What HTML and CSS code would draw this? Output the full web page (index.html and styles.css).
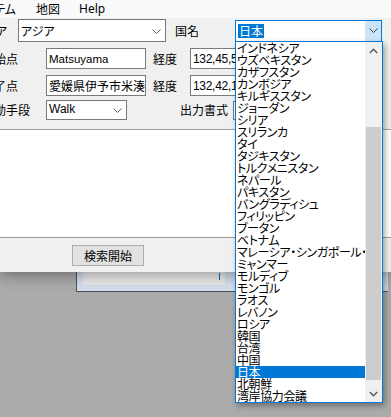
FILE: index.html
```html
<!DOCTYPE html>
<html lang="ja">
<head>
<meta charset="utf-8">
<title>経路検索</title>
<link rel="stylesheet" href="styles.css">
</head>
<body>
<div class="screen">
  <div class="window">
    <div class="menubar">
      <span class="menu menu-sys">システム</span>
      <span class="menu menu-map">地図</span>
      <span class="menu menu-help">Help</span>
    </div>
    <div class="form">
      <div class="row row-area">
        <span class="label label-area"><span>エリア</span></span>
        <div class="combo combo-area"><span class="combo-text">アジア</span><svg class="chev" width="9" height="5" viewBox="0 0 9 5"><polyline points="0.5,0.5 4.5,4.5 8.5,0.5" fill="none" stroke="#606060" stroke-width="1"/></svg></div>
        <span class="label label-country">国名</span>
        <div class="combo combo-country"><span class="combo-text"><span class="sel">日本</span></span><span class="drop-btn"><svg width="9" height="5" viewBox="0 0 9 5"><polyline points="0.5,0.5 4.5,4.5 8.5,0.5" fill="none" stroke="#404040" stroke-width="1"/></svg></span></div>
      </div>
      <div class="row row-start">
        <span class="label label-main">開始点</span>
        <div class="input input-name">Matsuyama</div>
        <span class="label label-lng">経度</span>
        <div class="input input-coord">132,45,55</div>
      </div>
      <div class="row row-end">
        <span class="label label-main">終了点</span>
        <div class="input input-name">愛媛県伊予市米湊</div>
        <span class="label label-lng">経度</span>
        <div class="input input-coord">132,42,13</div>
      </div>
      <div class="row row-mode">
        <span class="label label-main">移動手段</span>
        <div class="combo combo-walk"><span class="combo-text">Walk</span><svg class="chev" width="9" height="5" viewBox="0 0 9 5"><polyline points="0.5,0.5 4.5,4.5 8.5,0.5" fill="none" stroke="#606060" stroke-width="1"/></svg></div>
        <span class="label label-fmt">出力書式</span>
        <div class="combo combo-fmt"></div>
      </div>
    </div>
    <div class="output"></div>
    <div class="footer">
      <button class="btn-search">検索開始</button>
    </div>
  </div>

  <div class="behind">
    <div class="behind-panel"><span class="caret"></span></div>
  </div>

  <div class="dropdown">
    <ul class="list">
      <li>インドネシア</li>
      <li>ウズベキスタン</li>
      <li>カザフスタン</li>
      <li>カンボジア</li>
      <li>キルギススタン</li>
      <li>ジョーダン</li>
      <li>シリア</li>
      <li>スリランカ</li>
      <li>タイ</li>
      <li>タジキスタン</li>
      <li>トルクメニスタン</li>
      <li>ネパール</li>
      <li>パキスタン</li>
      <li>バングラディシュ</li>
      <li>フィリッピン</li>
      <li>ブータン</li>
      <li>ベトナム</li>
      <li>マレーシア・シンガポール・ブルネイ</li>
      <li>ミャンマー</li>
      <li>モルディブ</li>
      <li>モンゴル</li>
      <li>ラオス</li>
      <li>レバノン</li>
      <li>ロシア</li>
      <li>韓国</li>
      <li>台湾</li>
      <li>中国</li>
      <li class="selected">日本</li>
      <li>北朝鮮</li>
      <li>湾岸協力会議</li>
    </ul>
    <div class="scrollbar">
      <div class="sb-arrow"><svg width="9" height="6" viewBox="0 0 9 6"><polyline points="0.8,5 4.5,1.3 8.2,5" fill="none" stroke="#606060" stroke-width="1.6"/></svg></div>
      <div class="sb-track"><div class="sb-thumb"></div></div>
      <div class="sb-arrow"><svg width="9" height="6" viewBox="0 0 9 6"><polyline points="0.8,1 4.5,4.7 8.2,1" fill="none" stroke="#606060" stroke-width="1.6"/></svg></div>
    </div>
  </div>
</div>
</body>
</html>
```

FILE: styles.css
```css
* { box-sizing: border-box; }

html, body {
  margin: 0;
  padding: 0;
}

body {
  width: 391px;
  height: 417px;
  overflow: hidden;
  background: #ababab;
  font-family: "Noto Sans CJK JP", "Noto Sans", sans-serif;
  font-size: 12px;
  color: #000;
}

.screen {
  position: relative;
  width: 391px;
  height: 417px;
  overflow: hidden;
}

.window {
  position: relative;
  z-index: 2;
  width: 391px;
  height: 272px;
  background: #f0f0f0;
  display: flex;
  flex-direction: column;
  box-shadow: 0 3px 14px rgba(0, 0, 0, 0.38);
}

/* menu bar */
.menubar {
  height: 18px;
  flex: none;
  background: #fafafa;
  display: flex;
  align-items: center;
  font-size: 12px;
  line-height: 18px;
}

.menu { display: block; white-space: nowrap; }
.menu-sys {
  width: 50px;
  margin-left: -34px;
  text-align: right;
  font-feature-settings: "palt";
}
.menu-map { margin-left: 20px; }
.menu-help { margin-left: 19px; font-family: "Noto Sans", sans-serif; }

/* form */
.form {
  margin-left: -18px;
  flex: none;
}

.row {
  display: flex;
  align-items: center;
}

.row-area { height: 23px; margin-top: 1px; }
.row-start { height: 21px; margin-top: 6px; }
.row-end { height: 21px; margin-top: 6px; }
.row-mode { height: 20px; margin-top: 4px; }

.label {
  flex: none;
  white-space: nowrap;
  line-height: 16px;
  font-feature-settings: "palt";
}
.label-area {
  width: 36px;
  display: flex;
  justify-content: flex-end;
  padding-right: 11px;
}
.label-area span { flex: none; }
.label-main { width: 64px; }
.label-country { margin-left: 9px; width: 60px; }
.label-lng { margin-left: 7px; width: 37px; }
.label-fmt { margin-left: 53px; width: 53px; }

.input, .combo {
  flex: none;
  display: flex;
  align-items: center;
  background: #fff;
  border: 1px solid #7a7a7a;
  overflow: hidden;
  white-space: nowrap;
}

.input {
  height: 21px;
  padding-left: 2px;
  font-size: 12px;
}
.input-name { width: 100px; }
.input-coord {
  width: 100px;
  padding-left: 2px;
  font-family: "Liberation Sans", sans-serif;
  font-size: 12px;
  letter-spacing: -0.3px;
}
.row-start .input-name {
  font-family: "Liberation Sans", sans-serif;
  font-size: 11.5px;
}

.combo { justify-content: space-between; padding: 0 4px 0 2px; }
.combo-text { font-feature-settings: "palt"; }
.combo-area { width: 148px; height: 23px; }
.combo-walk {
  width: 81px;
  height: 20px;
  font-family: "Liberation Sans", sans-serif;
  font-size: 12px;
}
.combo-walk .combo-text { margin-top: -2px; }
.combo-fmt { width: 120px; height: 19px; }
.chev { flex: none; margin-top: 1px; }

.combo-country {
  width: 147px;
  height: 22px;
  border-color: #0078d7;
  padding: 0;
  align-items: stretch;
}
.combo-country .combo-text {
  display: flex;
  align-items: center;
  padding-left: 2px;
}
.sel {
  background: #0078d7;
  color: #fff;
  padding: 0 1px;
  line-height: 14px;
}
.drop-btn {
  width: 16px;
  background: #cce4f7;
  display: flex;
  align-items: center;
  justify-content: center;
}

/* output area */
.output {
  flex: none;
  margin-top: 9px;
  height: 109px;
  background: #fff;
  border-top: 1px solid #a0a0a0;
  border-bottom: 1px solid #999;
}

.footer {
  flex: 1;
  padding: 7px 0 0 72px;
}

.btn-search {
  width: 72px;
  height: 21px;
  padding: 0;
  background: #e1e1e1;
  border: 1px solid #adadad;
  font-family: "Noto Sans CJK JP", sans-serif;
  font-size: 12px;
  line-height: 18px;
  color: #000;
}

/* window behind */
.behind {
  position: absolute;
  z-index: 1;
  left: 76px;
  top: 240px;
  width: 312px;
  height: 52px;
  background: #d3dfec;
  border-left: 1px solid #4f4f4f;
  border-bottom: 1px solid #4f4f4f;
  padding: 0 0 6px 6px;
}
.behind-panel {
  position: relative;
  width: 142px;
  height: 45px;
  background: linear-gradient(#f6f6f6, #e9e9e9);
}
.caret {
  position: absolute;
  left: 136px;
  top: 33px;
  width: 1px;
  height: 7px;
  background: #0067c0;
}

/* dropdown list */
.dropdown {
  position: absolute;
  z-index: 5;
  left: 235px;
  top: 41px;
  width: 148px;
  height: 362px;
  border: 1px solid #0078d7;
  background: #fff;
  display: flex;
  box-shadow: 2px 3px 6px rgba(0, 0, 0, 0.35);
}

.list {
  margin: 0;
  padding: 0;
  list-style: none;
  width: 129px;
  overflow: hidden;
}
.list li {
  height: 12px;
  line-height: 12px;
  padding-left: 1px;
  white-space: nowrap;
  font-size: 12px;
  letter-spacing: -0.4px;
  font-feature-settings: "palt";
}
.list li.selected {
  background: #0078d7;
  color: #fff;
}

.scrollbar {
  width: 17px;
  display: flex;
  flex-direction: column;
  background: #f0f0f0;
}
.sb-arrow {
  height: 17px;
  flex: none;
  display: flex;
  align-items: center;
  justify-content: center;
}
.sb-track {
  flex: 1;
  padding: 68px 1px 0 1px;
}
.sb-thumb {
  height: 253px;
  background: #cdcdcd;
}
```
